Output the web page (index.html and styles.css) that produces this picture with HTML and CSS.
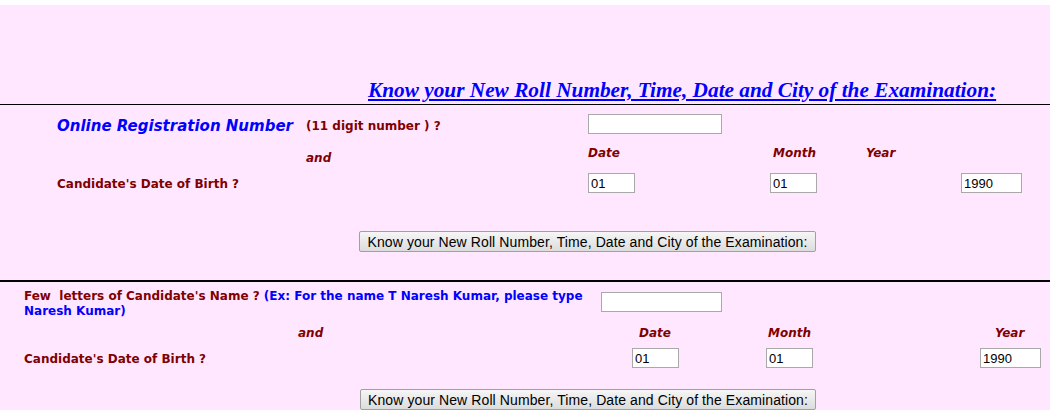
FILE: index.html
```html
<!DOCTYPE html>
<html lang="en">
<head>
    <meta charset="UTF-8">
    <title>Know your New Roll Number</title>
    <link rel="stylesheet" href="styles.css">
</head>
<body>
    <div class="top-strip"></div>

    <!-- Heading -->
    <div class="heading">
        <a href="#">Know your New Roll Number, Time, Date and City of the Examination:</a>
    </div>
    <hr class="rule">

    <!-- Search by registration number -->
    <form class="search search-reg">
        <div class="reg-title">Online Registration Number</div>
        <div class="hint c3 first">(11 digit number ) ?</div>
        <div class="c4"><input type="text" class="box box-reg"></div>

        <div class="and c3">and</div>
        <div class="lbl c4">Date</div>
        <div class="lbl c5 lbl-month">Month</div>
        <div class="lbl c6">Year</div>

        <div class="hint c2">Candidate's Date of Birth ?</div>
        <div class="c4"><input type="text" class="box box-day" value="01"></div>
        <div class="c5"><input type="text" class="box box-day" value="01"></div>
        <div class="c7"><input type="text" class="box box-year" value="1990"></div>

        <div class="btn-row">
            <button type="button" class="btn">Know your New Roll Number, Time, Date and City of the Examination:</button>
        </div>
    </form>

    <hr class="rule rule-thick">

    <!-- Search by name -->
    <form class="search search-name">
        <div class="hint name-q">Few&nbsp; letters of Candidate's Name ? <span class="blue">(Ex: For the name T Naresh Kumar, please type Naresh Kumar)</span></div>
        <div class="c4 name-cell"><input type="text" class="box box-name"></div>

        <div class="and c3">and</div>
        <div class="lbl c5 lbl-date">Date</div>
        <div class="lbl c6 lbl-month2">Month</div>
        <div class="lbl c7 lbl-year">Year</div>

        <div class="hint c2">Candidate's Date of Birth ?</div>
        <div class="c5"><input type="text" class="box box-day" value="01"></div>
        <div class="c6"><input type="text" class="box box-day" value="01"></div>
        <div class="c7"><input type="text" class="box box-year" value="1990"></div>

        <div class="btn-row">
            <button type="button" class="btn btn-2">Know your New Roll Number, Time, Date and City of the Examination:</button>
        </div>
    </form>
</body>
</html>
```

FILE: styles.css
```css
/* Global */
body {
    margin: 0;
    padding: 0;
    background-color: #ffe8ff;
    font-family: "DejaVu Sans", Verdana, sans-serif;
    font-size: 12px;
    font-weight: bold;
    color: #800000;
    height: 410px;
    overflow: hidden;
}
.top-strip {
    height: 5px;
    background: #fff;
}

/* Heading */
.heading {
    padding: 71px 0 0 368px;
    height: 28px;
    line-height: 28px;
}
.heading a {
    font-family: "Liberation Serif", "Times New Roman", serif;
    font-size: 21.3px;
    font-style: italic;
    font-weight: bold;
    color: #0000ff;
}
.rule {
    margin: 0;
    border: 0;
    border-top: 1px solid #000;
    height: 0;
}
.rule-thick {
    border-top-width: 2px;
}

/* Forms */
.search {
    display: grid;
    align-items: center;
    margin: 0;
    line-height: 14px;
}
.search-reg {
    grid-template-columns: 57px 249px 282px 182px 96px 95px 1fr;
    grid-template-rows: 38px 24px 32px 1fr;
    height: 175px;
}
.search-name {
    grid-template-columns: 24px 274px 303px 31px 134px 214px 1fr;
    grid-template-rows: 38px 23px 30px 1fr;
    height: 128px;
}
.c2 { grid-column: 2 / 4; padding-top: 2px; }
.c3 { grid-column: 3; }
.c4 { grid-column: 4; }
.c5 { grid-column: 5; }
.c6 { grid-column: 6; }
.c7 { grid-column: 7; }

.reg-title {
    grid-column: 2;
    color: #0000ff;
    font-size: 15px;
    font-style: italic;
    padding-top: 3px;
}
.first { padding-top: 4px; }
.and, .lbl {
    font-style: italic;
    align-self: start;
}
.search-reg .lbl { padding-top: 3px; }
.search-reg .and { padding-top: 8px; }
.search-name .lbl,
.search-name .and { padding-top: 6px; }

.name-q {
    grid-column: 2 / 4;
    width: 560px;
    line-height: 15px;
    align-self: start;
    padding-top: 7px;
}
.name-cell {
    align-self: start;
    padding-top: 10px;
}
.blue {
    color: #0000ff;
}
.lbl-month { padding-left: 3px; }
.lbl-date { padding-left: 7px; }
.lbl-month2 { padding-left: 2px; }
.lbl-year { padding-left: 15px; }

.box {
    box-sizing: border-box;
    height: 20px;
    border: 1px solid #a9a9a9;
    background: #fff;
    font-family: "Liberation Sans", Arial, sans-serif;
    font-size: 13px;
    font-weight: normal;
    color: #000;
    padding: 0 2px;
    margin: 0;
    display: block;
}
.box-reg { width: 134px; }
.box-name { width: 121px; }
.box-day { width: 47px; }
.box-year { width: 61px; }

.btn-row {
    grid-column: 1 / -1;
    align-self: start;
    padding-left: 359px;
}
.search-reg .btn-row { padding-top: 32px; }
.search-name .btn-row { padding-top: 16px; padding-left: 360px; }
.btn {
    display: block;
    height: 21px;
    width: 457px;
    padding: 0;
    border: 1px solid #a0a0a0;
    border-radius: 2px;
    background: linear-gradient(#f6f6f6, #dcdcdc);
    font-family: "Liberation Sans", Arial, sans-serif;
    font-size: 14px;
    letter-spacing: 0.1px;
    color: #000;
}
.btn-2 { width: 456px; }
```
